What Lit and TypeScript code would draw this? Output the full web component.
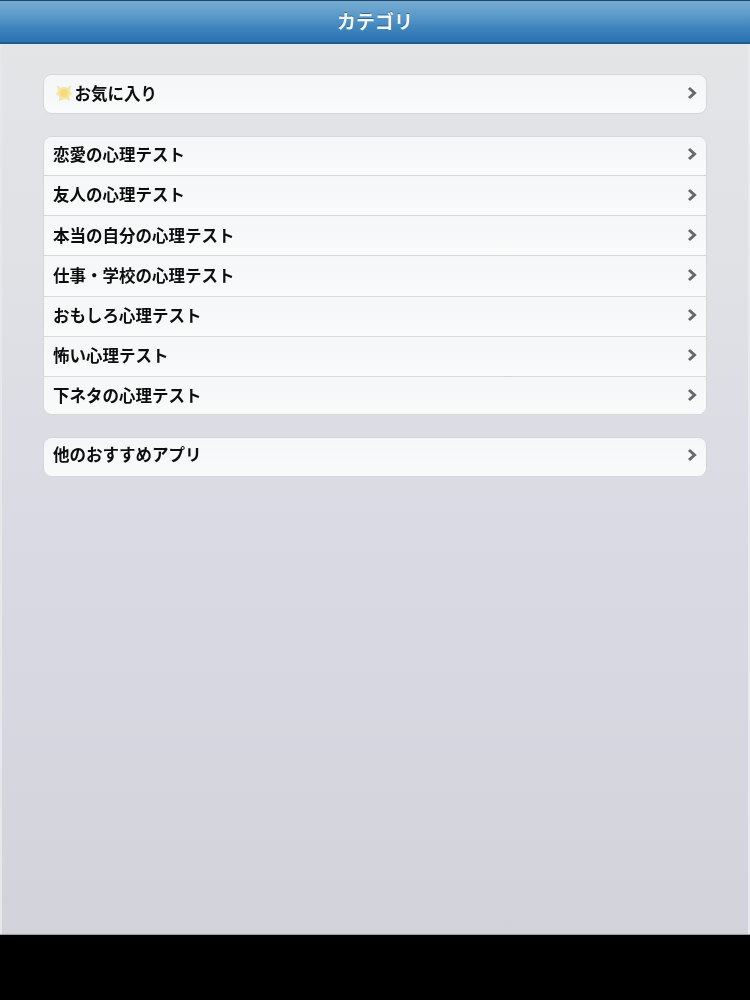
import { LitElement, html, css } from "lit";
import { customElement } from "lit/decorators.js";
import { classMap } from "lit/directives/class-map.js";

const chevron = html`<svg class="chev" viewBox="0 0 10 14" width="10" height="14" aria-hidden="true">
  <path d="M2 2 L7.5 7 L2 12" fill="none" stroke="#66696d" stroke-width="3" />
</svg>`;

const star = html`<svg class="star" viewBox="0 0 18 18" width="18" height="18" aria-hidden="true">
  <path d="M2 1 L6 4 L9 2.5 L12 4 L16 1 L15 7 L17 10 L14 12 L15 17 L9.5 15 L4 17 L4 12 L1 10 L3 7 Z" fill="#f5e6a4" />
  <circle cx="9" cy="9" r="4" fill="#f2da7e" />
</svg>`;

const groups: { label: string; fav?: boolean }[][] = [
  [{ label: "お気に入り", fav: true }],
  [
    { label: "恋愛の心理テスト" },
    { label: "友人の心理テスト" },
    { label: "本当の自分の心理テスト" },
    { label: "仕事・学校の心理テスト" },
    { label: "おもしろ心理テスト" },
    { label: "怖い心理テスト" },
    { label: "下ネタの心理テスト" },
  ],
  [{ label: "他のおすすめアプリ" }],
];

@customElement("app-root")
export class AppRoot extends LitElement {
  static styles = css`
    :host {
      display: flex;
      flex-direction: column;
      width: 750px;
      height: 1000px;
      background: #000;
      font-family: "Noto Sans CJK JP", "Noto Sans", sans-serif;
    }
    .screen {
      height: 935px;
      display: flex;
      flex-direction: column;
      overflow: hidden;
      background: linear-gradient(180deg, #e3e5e7 0%, #dfe1e5 30%, #d8d9e3 60%, #d2d3da 100%);
      border-bottom: 1px solid #9c9da3;
      box-sizing: border-box;
      box-shadow: inset 2px 0 0 #e6e7ea, inset -2px 0 0 #e9eaed;
      filter: blur(0.6px);
    }
    .bar {
      height: 44px;
      flex: none;
      box-sizing: border-box;
      display: flex;
      align-items: center;
      justify-content: center;
      padding-bottom: 3px;
      background: linear-gradient(180deg, #78acd2 0%, #5f9ecb 30%, #3f85bd 65%, #2a73b2 100%);
      border-top: 1px solid #23466e;
      border-bottom: 2px solid #1f5c93;
      color: #f2f6fa;
      font-size: 19px;
      font-weight: 700;
      text-shadow: 0 -1px 0 rgba(30, 70, 110, 0.6);
    }
    .list {
      display: flex;
      flex-direction: column;
      gap: 22px;
      padding: 30px 43px 0;
    }
    .group {
      background: #f7f8f9;
      border: 1px solid #d4d6d9;
      border-radius: 9px;
      overflow: hidden;
    }
    .row {
      height: 40.2px;
      box-sizing: border-box;
      display: flex;
      align-items: center;
      padding: 0 9px 2px;
      font-size: 16.5px;
      font-weight: 700;
      color: #0e0e0e;
      border-top: 1px solid #d6d8da;
      background: linear-gradient(180deg, #f5f6f7, #f9fafa);
    }
    .row:first-child {
      border-top: none;
      height: 38px;
      padding-bottom: 4px;
    }
    .row.fav:first-child {
      padding-bottom: 2px;
    }
    .row:last-child:not(:first-child) {
      height: 37.8px;
      padding-bottom: 1px;
    }
    .label {
      flex: 1;
      line-height: 1;
    }
    .star {
      margin: 0 2px 0 1.5px;
      flex: none;
    }
    .chev {
      flex: none;
    }
  `;

  render() {
    return html`<div class="screen">
      <div class="bar">カテゴリ</div>
      <div class="list">
        ${groups.map(
          (g) => html`<div class="group">
            ${g.map(
              (r) => html`<div class=${classMap({ row: true, fav: !!r.fav })}>
                ${r.fav ? star : ""}<span class="label">${r.label}</span>${chevron}
              </div>`
            )}
          </div>`
        )}
      </div>
    </div>`;
  }
}
